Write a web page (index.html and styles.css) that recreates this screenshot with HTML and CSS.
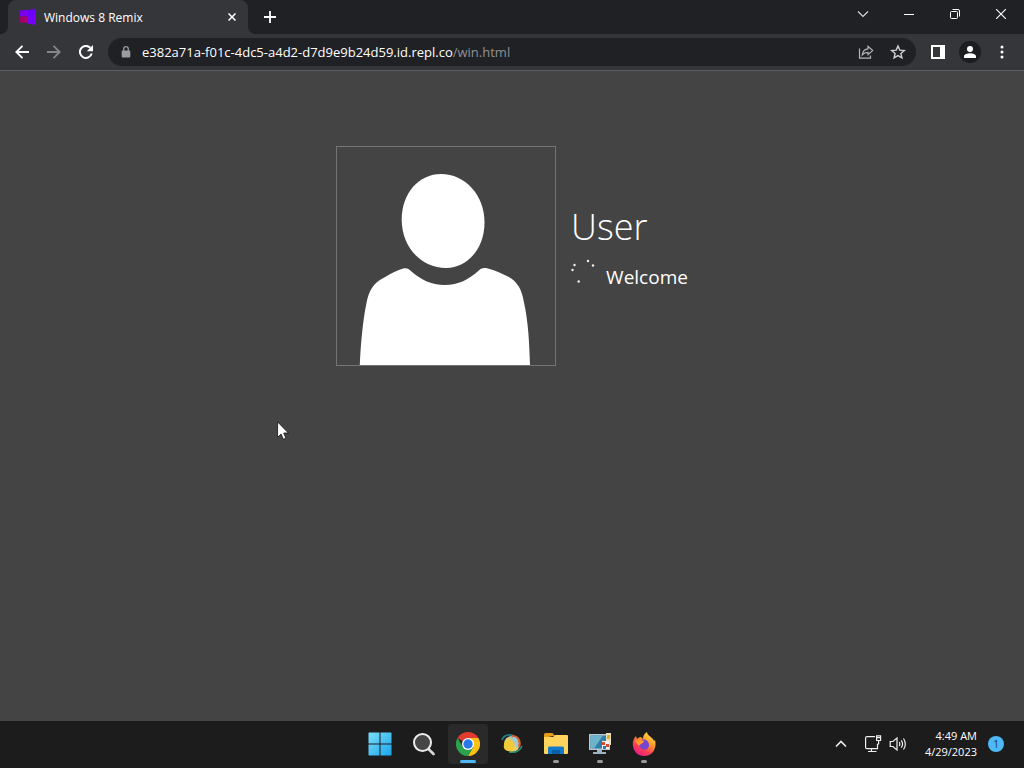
FILE: index.html
```html
<!DOCTYPE html>
<html lang="en">
<head>
<meta charset="utf-8">
<title>Windows 8 Remix</title>
<link rel="stylesheet" href="styles.css">
</head>
<body>
<div class="desktop">
  <header class="tabstrip">
    <div class="tab">
      <svg class="favicon" width="16" height="16" viewBox="0 0 16 16"><path fill="#7a00f0" d="M0 1.500 7 1v6.600H0z"/><path fill="#6a00ff" d="M7 1l9-1v8H7z"/><path fill="#a3006e" d="M0 7.600h7V14l-7-.6z"/><path fill="#7400f5" d="M7 7.600h9V16l-9-1.400z"/></svg>
      <span class="tab-title">Windows 8 Remix</span>
      <button class="tab-close" aria-label="Close tab"><svg width="8" height="8" viewBox="0 0 8 8" stroke="#fff" stroke-width="1.500"><path d="M.5.5l7 7M7.500.5l-7 7"/></svg></button>
    </div>
    <button class="new-tab" aria-label="New tab"><svg width="12" height="12" viewBox="0 0 12 12" stroke="#fff" stroke-width="1.800"><path d="M6 0v12M0 6h12"/></svg></button>
    <div class="window-controls">
      <button aria-label="Search tabs"><svg width="12" height="12" viewBox="0 0 12 12" fill="none" stroke="#ddd" stroke-width="1.100"><path d="M1 3.500l5 5 5-5"/></svg></button>
      <button aria-label="Minimize"><svg width="10" height="10" viewBox="0 0 10 10" stroke="#fff"><path d="M0 5.500h10"/></svg></button>
      <button aria-label="Restore"><svg width="10" height="10" viewBox="0 0 10 10" fill="none" stroke="#fff"><rect x=".5" y="2.500" width="7" height="7" rx="1"/><path d="M2.500.5H8A1.500 1.500 0 0 1 9.500 2v5.500"/></svg></button>
      <button aria-label="Close"><svg width="10" height="10" viewBox="0 0 10 10" stroke="#fff" stroke-width="1.100"><path d="M0 0l10 10M10 0L0 10"/></svg></button>
    </div>
  </header>

  <nav class="toolbar">
    <button aria-label="Back"><svg width="14" height="14" viewBox="0 0 14 14" fill="none" stroke="#fff" stroke-width="1.800"><path d="M14 7H1.500M7.500.8L1.300 7l6.200 6.200"/></svg></button>
    <button aria-label="Forward"><svg width="14" height="14" viewBox="0 0 14 14" fill="none" stroke="#85868a" stroke-width="1.800"><path d="M0 7h12.500M6.500.8L12.700 7l-6.200 6.200"/></svg></button>
    <button aria-label="Reload"><svg width="14" height="14" viewBox="0 0 14 14"><path fill="none" stroke="#fff" stroke-width="2" d="M12.700 8.500A6 6 0 1 1 11.300 2.800"/><path fill="#fff" d="M14 0v6.200H7.800z"/></svg></button>
    <div class="address">
      <svg class="lock" width="10" height="12" viewBox="0 0 10 12"><rect y="4.500" x=".7" width="8.600" height="7" rx="1" fill="#9a9ca0"/><path d="M2.700 5V3a2.300 2.300 0 0 1 4.600 0v2" fill="none" stroke="#9a9ca0" stroke-width="1.300"/></svg>
      <a class="url" href="#">e382a71a-f01c-4dc5-a4d2-d7d9e9b24d59.id.repl.co<span>/win.html</span></a>
      <button aria-label="Share"><svg width="16" height="16" viewBox="0 0 16 16" fill="none" stroke="#b5b6b9" stroke-width="1.200"><path d="M1.500 4.500v9.700h11v-2.700"/><path d="M4.300 10.800C4.800 7.200 6.800 5 10 4.800V2.300l4.700 4.300L10 10.700V8.300C7.600 8.300 5.800 9 4.300 10.800z"/></svg></button>
      <button aria-label="Bookmark"><svg width="16" height="16" viewBox="0 0 16 16" fill="none" stroke="#cfd0d3" stroke-width="1.400"><path d="M8 2l1.800 4.100 4.500.4-3.400 3 1 4.400L8 11.600l-3.900 2.300 1-4.400-3.400-3 4.500-.4z"/></svg></button>
    </div>
    <button aria-label="Side panel"><svg width="14" height="14" viewBox="0 0 14 14"><path fill="#fff" fill-rule="evenodd" d="M0 0h14v14H0zM2 2v10h7V2z"/></svg></button>
    <button aria-label="Profile"><svg width="24" height="24" viewBox="0 0 24 24"><circle cx="12" cy="12" r="11" fill="#1c1d20"/><circle cx="12" cy="9" r="3" fill="#fff"/><path fill="#fff" d="M6 18v-1.600C6 14 9.500 13.200 12 13.200s6 .8 6 3.200V18z"/></svg></button>
    <button aria-label="Menu"><svg width="4" height="14" viewBox="0 0 4 14" fill="#fff"><circle cx="2" cy="2" r="1.500"/><circle cx="2" cy="7" r="1.500"/><circle cx="2" cy="12" r="1.500"/></svg></button>
  </nav>

  <main class="page">
    <section class="login">
      <div class="portrait">
        <svg viewBox="0 0 218 218" fill="#fff"><path d="M104 27c24 0 43.500 21 43.500 48.500 0 26-17 45.500-38.500 45.500-25 0-44.300-21-44.300-48.500C64.700 46 82 27 104 27z"/><path d="M22.800 218c1-22 3-44 6.500-61 2.700-15 7.700-21 18-26.500 7-4 13-7.500 19-9 3-.6 5 .2 7 2 10 9 21 14.500 34.500 14.500 13.500 0 24-5.500 34-14.500 3-2.500 5-3 9-2 7 1.800 14 5 20 8 9.500 5 14 13 16 25 4.500 20 5.500 41 6.200 63.500z"/></svg>
      </div>
      <div class="identity">
        <h1>User</h1>
        <div class="status">
          <svg width="26" height="26" viewBox="0 0 26 26" fill="#f2f2f2"><circle cx="17" cy="2" r="1.200"/><circle cx="22" cy="6.500" r="1.200"/><circle cx="3.500" cy="6" r="1.200"/><circle cx="1.500" cy="11" r="1.200"/><circle cx="7.700" cy="22.500" r="1.200"/></svg>
          <span>Welcome</span>
        </div>
      </div>
    </section>
  </main>

  <footer class="taskbar">
    <div class="apps">
      <button aria-label="Start"><svg width="24" height="24" viewBox="0 0 24 24"><defs><linearGradient id="win" x1="0" y1="0" x2="24" y2="24" gradientUnits="userSpaceOnUse"><stop stop-color="#7ee0fb"/><stop offset="1" stop-color="#17a3ea"/></linearGradient></defs><path fill="url(#win)" d="M1 .5h10.500V11.500H.5V1zM12.500.5H23l.5.5v10.500h-11zM.5 12.500h11v11H1l-.5-.5zM12.500 12.500h11V23l-.5.500H12.500z"/></svg></button>
      <button aria-label="Search"><svg width="24" height="24" viewBox="0 0 24 24"><path d="M16 16.500l5.500 5.500" stroke="#d8d8d8" stroke-width="2.700" stroke-linecap="round"/><circle cx="10.500" cy="10.500" r="8.500" fill="#454545" stroke="#ececec" stroke-width="2"/></svg></button>
      <button class="active" aria-label="Chrome"><svg width="24" height="24" viewBox="0 0 24 24"><path fill="#e33b2e" d="M12 12L1.600 6A12 12 0 0 1 22.400 6z"/><path fill="#fbc116" d="M12 6h10.400A12 12 0 0 1 12 24l5.200-9z"/><path fill="#2ba24c" d="M1.600 6A12 12 0 0 0 12 24l5.200-9-5.200 3-5.200-3z"/><circle cx="12" cy="12" r="6" fill="#fff"/><circle cx="12" cy="12" r="4.700" fill="#2878e8"/></svg></button>
      <button aria-label="Swirl"><svg width="24" height="24" viewBox="0 0 24 24"><defs><linearGradient id="orb" x1="0" y1="1" x2="1" y2="0"><stop stop-color="#f0c22e"/><stop offset=".5" stop-color="#e8cf6a"/><stop offset=".75" stop-color="#8fc0d4"/><stop offset="1" stop-color="#d9622c"/></linearGradient></defs><circle cx="12" cy="12" r="8" fill="url(#orb)"/><path d="M2 8c2-5 7-6 12-4" fill="none" stroke="#1f7f8c" stroke-width="1.800"/><path d="M12 4c6 0 9 5 7 11" fill="none" stroke="#d9602c" stroke-width="2.200"/><path d="M13 6c4 1 5 5 3 9" fill="none" stroke="#9ccbe0" stroke-width="2.500"/><path d="M9 20c6 1 11-1 13-6" fill="none" stroke="#2b8f78" stroke-width="1.600"/><path d="M4 16c-1-5 2-8 6-8 4 1 5 6 3 10-4 2-8 1-9-2z" fill="#f2c936"/></svg></button>
      <button class="open" aria-label="File Explorer"><svg width="26" height="24" viewBox="0 0 26 24"><path fill="#e79a16" d="M1 2.500Q1 1 2.500 1h7L12 4h-2L1 6z"/><path fill="#ffd45c" d="M1 5h9l2-2h12q1 0 1 1v17q0 1-1 1H2q-1 0-1-1z"/><path fill="#1379c9" d="M5 22v-6q0-1.500 1.500-1.500h13Q21 14.500 21 16v6z"/><path fill="#0b5ea8" d="M9 18h8v4H9z"/></svg></button>
      <button class="open" aria-label="Remote computer"><svg width="24" height="24" viewBox="0 0 24 24"><path fill="#b9c6cd" d="M1 2h21v16H1z"/><path fill="#2f7fa8" d="M2.500 3.500h18v13h-18z"/><path fill="#6fb2cb" d="M2.500 3.500H15l-9 13H2.500z"/><path fill="#9cb4c2" d="M9 18h5v2h4v2H5v-2h4z"/><path fill="#eadfbf" d="M18 1h5v12h-5z"/><path fill="#e0ad2f" d="M19 3h3v4h-3z"/><path fill="#f4f4f4" d="M14 9h7v8h-7z"/><path fill="#d8492f" d="M14 10h3v3h-3zM18 12h3v3h-3z"/><path fill="#3578b0" d="M15 14h3v3h-3z"/></svg></button>
      <button class="open" aria-label="Firefox"><svg width="24" height="24" viewBox="0 0 24 24"><defs><linearGradient id="fox" x1=".9" y1="0" x2=".25" y2="1"><stop stop-color="#fff34f"/><stop offset=".4" stop-color="#ff9c2a"/><stop offset=".7" stop-color="#ff4052"/><stop offset="1" stop-color="#e5198b"/></linearGradient></defs><path fill="url(#fox)" d="M1 14C0 10 2 6 4 4l1 3c1-1 2-2 4-2l2 2c0-4 2-6 4-7 0 4 6 5 7 9l1-1c2 8-2 16-11 16C6 24 2 20 1 14z"/><path fill="#7646cf" d="M8 9c3-3 9-1 9 4 0 4-4 6-7 4-2-1-3-3-2-5l3-1z"/><path fill="#ff9828" d="M3 9c2-2 4-2 6-1l3 1c0 2-3 2-4 4-2 1-3-1-5-4z"/></svg></button>
    </div>
    <div class="tray">
      <button aria-label="Show hidden icons"><svg width="12" height="8" viewBox="0 0 12 8" fill="none" stroke="#eee" stroke-width="1.600"><path d="M1 6.500l5-5 5 5"/></svg></button>
      <button class="system" aria-label="Network and volume">
        <svg width="18" height="18" viewBox="0 0 18 18" fill="none" stroke="#eee" stroke-width="1.200"><path d="M11 1.600H3Q1.600 1.600 1.600 3v9.400q0 1.200 1.400 1.200h10.500V9M7.500 13.600v3M4 16.500h8.500M12.600.8h4v4.700h-4zM14.600 5.500V9h-1.200M12.800 2.700h3.600"/></svg>
        <svg width="18" height="16" viewBox="0 0 18 16" fill="none" stroke="#eee" stroke-width="1.200"><path d="M1.200 5.500h2.700L8 2v12L3.900 10.500H1.200z"/><path d="M10.200 6q1.300 2 0 4M12.300 4.300q2.500 3.700 0 7.400M14.500 2.500q3.700 5.500 0 11"/></svg>
      </button>
      <button class="clock"><time>4:49 AM</time><time>4/29/2023</time></button>
      <button class="badge" aria-label="1 notification">1</button>
    </div>
  </footer>

  <svg class="cursor" width="12" height="19" viewBox="0 0 12 19"><path fill="#fff" stroke="#111" stroke-width=".8" d="M.6.900v15.400l3.500-3.300 2.300 5.300 2.500-1.100L6.700 12h4.700z"/></svg>
</div>
</body>
</html>
```
FILE: styles.css
```css
* { box-sizing: border-box; }

body {
  margin: 0;
  background: #444;
  color: #fff;
  font-family: "Open Sans", "Noto Sans", sans-serif;
}

button {
  display: flex;
  align-items: center;
  justify-content: center;
  flex: none;
  margin: 0;
  padding: 0;
  border: 0;
  background: none;
  color: inherit;
  font: inherit;
}

svg { display: block; flex: none; }

.desktop {
  position: relative;
  display: flex;
  flex-direction: column;
  min-height: 100vh;
}

.tabstrip {
  display: flex;
  height: 34px;
  padding-left: 8px;
  background: #202124;
}

.tab {
  position: relative;
  display: flex;
  align-items: center;
  width: 240px;
  padding: 0 10px 0 12px;
  border-radius: 8px 8px 0 0;
  background: #35363a;
  font-size: 12px;
}

.tab::before,
.tab::after {
  content: "";
  position: absolute;
  bottom: 0;
  width: 8px;
  height: 8px;
}

.tab::before {
  right: 100%;
  background: radial-gradient(circle at 0 0, transparent 8px, #35363a 8px);
}

.tab::after {
  left: 100%;
  background: radial-gradient(circle at 100% 0, transparent 8px, #35363a 8px);
}

.tab-title { flex: 1; margin-left: 8px; }
.tab-close { width: 12px; height: 16px; }
.new-tab { width: 44px; }

.window-controls {
  display: flex;
  height: 28px;
  margin-left: auto;
}

.window-controls button { width: 46px; }

.toolbar {
  display: flex;
  align-items: center;
  height: 37px;
  padding: 0 6px;
  border-bottom: 1px solid #5c5d60;
  background: #35363a;
}

.toolbar button { width: 32px; height: 32px; }

.address {
  display: flex;
  flex: 1;
  align-items: center;
  height: 28px;
  margin: 0 6px;
  padding: 0 2px 0 13px;
  border-radius: 14px;
  background: #202124;
}

.url {
  flex: 1;
  margin-left: 11px;
  color: #fff;
  font-size: 13px;
  font-weight: 500;
  text-decoration: none;
}

.url span { color: #8f9195; }

.page { flex: 1; padding-top: 75px; }

.login {
  display: flex;
  align-items: center;
  justify-content: center;
  gap: 15px;
}

.portrait {
  width: 220px;
  border: 1px solid #747474;
}

.identity { padding-bottom: 16px; }

h1 {
  margin: 0 0 6px;
  font-size: 36px;
  font-weight: 300;
  line-height: 52px;
}

.status {
  display: flex;
  gap: 9px;
  font-size: 19px;
  font-weight: 500;
  line-height: 36px;
}

.taskbar {
  display: grid;
  grid-template-columns: 1fr auto 1fr;
  align-items: center;
  height: 47px;
  padding-bottom: 2px;
  background: #1c1c1c;
}

.apps {
  display: flex;
  grid-column: 2;
  gap: 4px;
}

.apps button {
  position: relative;
  width: 40px;
  height: 40px;
  border-radius: 4px;
}

.apps .active { background: #2a2a2a; }

.apps .active::after,
.apps .open::after {
  content: "";
  position: absolute;
  bottom: 1px;
  width: 6px;
  height: 3px;
  border-radius: 2px;
  background: #9a9a9a;
}

.apps .active::after { width: 16px; background: #4cb8f5; }

.tray {
  display: flex;
  align-items: center;
  justify-content: flex-end;
  padding-right: 20px;
}

.system { gap: 7px; margin: 0 18px 0 17px; }

.clock {
  flex-direction: column;
  align-items: flex-end;
  margin-right: 11px;
  font-size: 11px;
  font-weight: 500;
  line-height: 16px;
}

.badge {
  width: 16px;
  height: 16px;
  border-radius: 50%;
  background: #4cb8f5;
  color: #173a50;
  font-size: 10px;
}

.cursor {
  position: absolute;
  left: 277px;
  top: 421px;
}
```
